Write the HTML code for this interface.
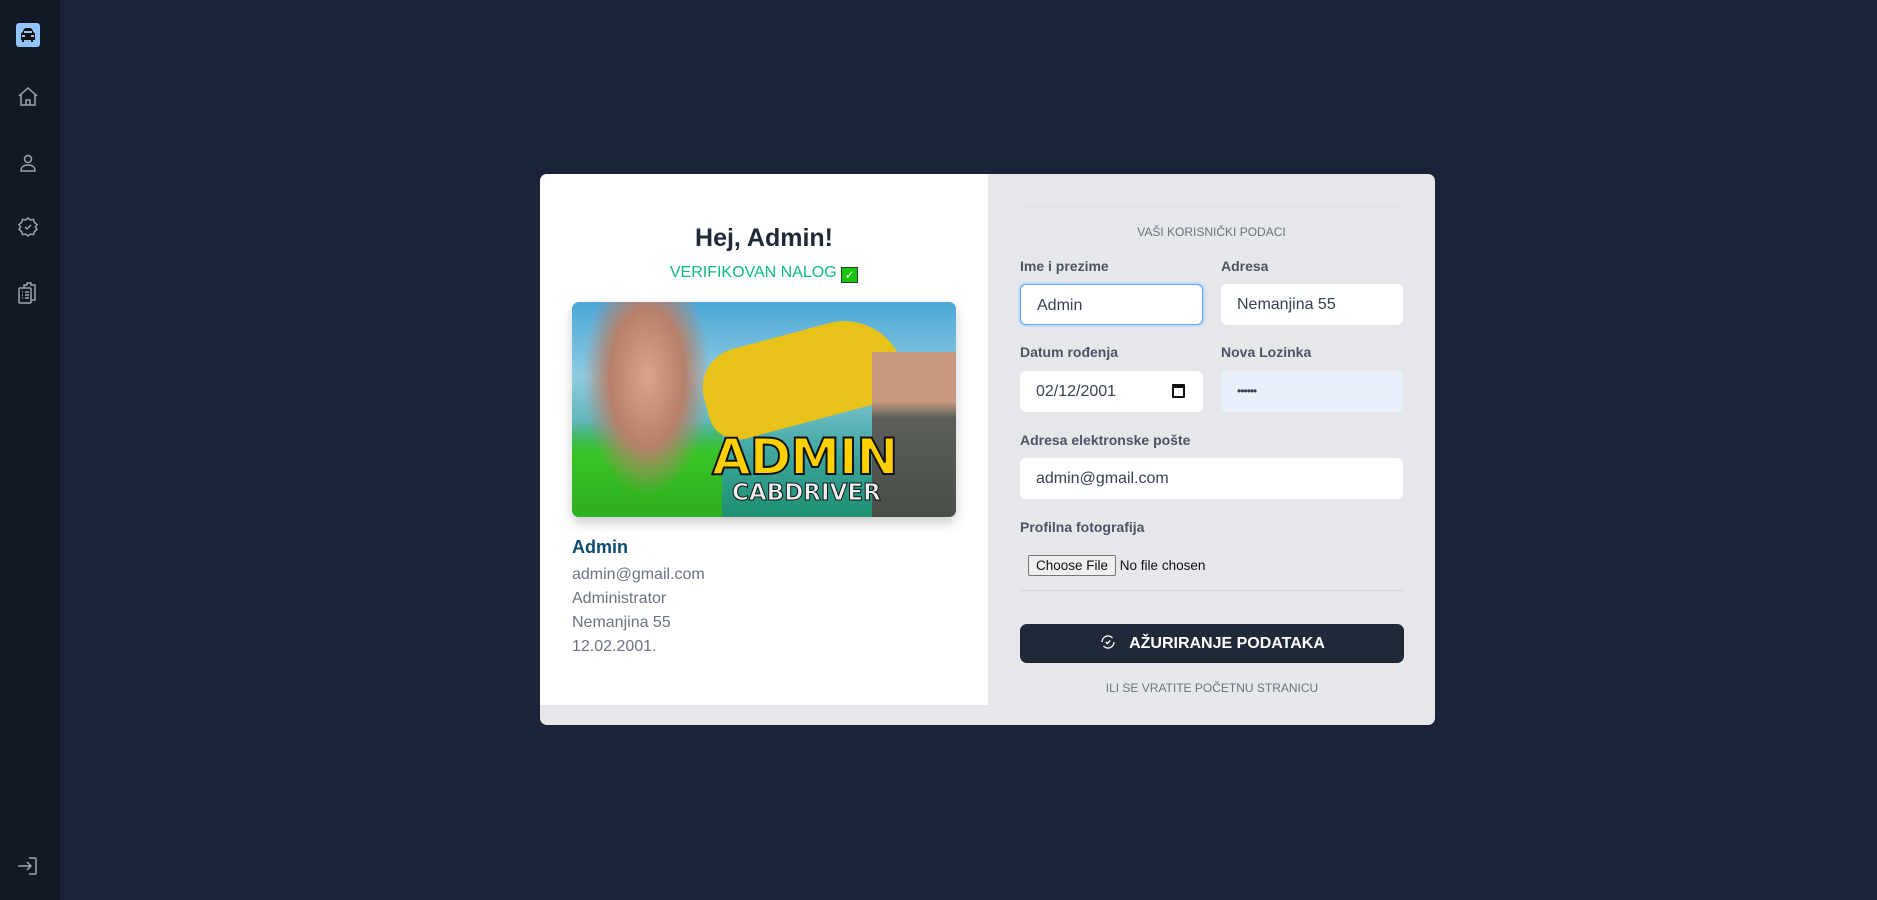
<!DOCTYPE html>
<html><head><meta charset="utf-8"><style>
*{box-sizing:border-box;margin:0;padding:0}
body{width:1877px;height:900px;background:#1b2338;font-family:"Liberation Sans",sans-serif;position:relative;overflow:hidden}
.side{position:absolute;left:0;top:0;width:60px;height:900px;background:#121826}
.ic{position:absolute;left:16px;width:24px;height:24px}
.card{position:absolute;left:540px;top:174px;width:895px;height:551px;background:#e5e7eb;border-radius:7px;overflow:hidden}
.lp{position:absolute;left:0;top:0;width:448px;height:531px;background:#fff}
.t{position:absolute;color:#6b7280}
.lbl{position:absolute;font-size:14px;font-weight:bold;color:#4b5563;line-height:16px}
.in{position:absolute;height:41px;background:#fff;border-radius:6px;font-size:16px;color:#374151;padding:0 16px;line-height:41px}
</style></head><body>
<div class="side">
<svg class="ic" style="top:23px" viewBox="0 0 24 24"><rect width="24" height="24" rx="3" fill="#93c5fd"/><path d="M9 5h6l1 2H8z" fill="#111"/><path d="M6 10l2-4h8l2 4h1v7h-2v2h-2v-2H8v2H6v-2H5v-7z" fill="#111"/><rect x="8" y="8" width="8" height="2" fill="#93c5fd"/><rect x="6" y="12" width="3" height="2" fill="#93c5fd"/><rect x="15" y="12" width="3" height="2" fill="#93c5fd"/></svg>
<svg class="ic" style="top:85px" viewBox="0 0 24 24" fill="none" stroke="#9ca3af" stroke-width="1.5"><path d="M3 11l9-8 9 8M5 9v11h14V9M10 20v-5h4v5"/></svg>
<svg class="ic" style="top:151px" viewBox="0 0 24 24" fill="none" stroke="#9ca3af" stroke-width="1.5"><circle cx="12" cy="8" r="3.5"/><path d="M5 20c0-4 3-6 7-6s7 2 7 6z"/></svg>
<svg class="ic" style="top:215px" viewBox="0 0 24 24" fill="none" stroke="#9ca3af" stroke-width="1.5"><path d="M12 3l2.5 2 3-.5 1 3 2.5 2-1.5 2.5 1.5 2.5-2.5 2-1 3-3-.5-2.5 2-2.5-2-3 .5-1-3-2.5-2 1.5-2.5L3 9.5l2.5-2 1-3 3 .5z"/><path d="M9 12l2 2 4-4"/></svg>
<svg class="ic" style="top:281px" viewBox="0 0 24 24" fill="none" stroke="#9ca3af" stroke-width="1.5"><rect x="3" y="7" width="12" height="15" rx="1"/><path d="M8 7V4h3V2h4v2h4v15h-4"/><path d="M6 11h1M9 11h4M6 14h1M9 14h4M6 17h1M9 17h4"/></svg>
<svg class="ic" style="top:854px" viewBox="0 0 24 24" fill="none" stroke="#9ca3af" stroke-width="1.5"><path d="M13 4h6a1 1 0 011 1v14a1 1 0 01-1 1h-6"/><path d="M2 12h13M11 8l4 4-4 4"/></svg>
</div>
<div class="card">
<div class="lp">
<div style="position:absolute;left:0;width:448px;top:50px;text-align:center;font-size:25px;font-weight:bold;color:#1f2937">Hej, Admin!</div>
<div style="position:absolute;left:0;width:448px;top:90px;text-align:center;font-size:16px;color:#10b981">VERIFIKOVAN NALOG <span style="display:inline-block;width:17px;height:16px;background:#16c60c;border:1px solid #333;vertical-align:-2px;color:#fff;font-size:12px;line-height:14px">✓</span></div>
<div style="position:absolute;left:32px;top:128px;width:384px;height:215px;border-radius:7px;overflow:hidden;box-shadow:0 6px 12px rgba(0,0,0,.2);background:linear-gradient(180deg,#4aa8d8 0%,#8fcbe0 35%,#3fa7a0 70%,#1d8f70 100%)">
<div style="position:absolute;left:0;top:0;width:150px;height:215px;background:radial-gradient(ellipse at 50% 35%,#d9a58a 0,#b7806a 35%,transparent 60%),linear-gradient(180deg,transparent 55%,#37c425 70%,#2fae1e 100%)"></div>
<div style="position:absolute;left:130px;top:30px;width:200px;height:90px;background:#e8c218;border-radius:40px 60px 20px 30px;transform:rotate(-15deg)"></div>
<div style="position:absolute;left:300px;top:50px;width:84px;height:165px;background:linear-gradient(#c79a80 0,#c79a80 30%,#5b5f58 40%,#4a4e48 100%)"></div>
<div style="position:absolute;left:140px;top:126px;font-size:50px;font-weight:900;color:#ffd000;-webkit-text-stroke:2px #111;font-family:'DejaVu Sans',sans-serif;letter-spacing:-1px">ADMIN</div>
<div style="position:absolute;left:160px;top:178px;font-size:23px;font-weight:900;color:#eee;-webkit-text-stroke:1px #111;font-family:'DejaVu Sans',sans-serif">CABDRIVER</div>
</div>
<div style="position:absolute;left:32px;top:363px;font-size:18px;font-weight:bold;color:#0c4a6e">Admin</div>
<div style="position:absolute;left:32px;top:389px;font-size:16px;line-height:24px;color:#6b7280">admin@gmail.com<br>Administrator<br>Nemanjina 55<br>12.02.2001.</div>
</div>
<div style="position:absolute;left:480px;top:32px;width:383px;height:1px;background:#dcdfe4"></div>
<div class="t" style="left:480px;width:383px;top:51px;text-align:center;font-size:12px">VAŠI KORISNIČKI PODACI</div>
<div class="lbl" style="left:480px;top:84px">Ime i prezime</div>
<div class="lbl" style="left:681px;top:84px">Adresa</div>
<div class="in" style="left:480px;top:110px;width:183px;border:1px solid #60a5fa;box-shadow:0 0 0 2px #bfdbfe">Admin</div>
<div class="in" style="left:681px;top:110px;width:182px">Nemanjina 55</div>
<div class="lbl" style="left:480px;top:170px">Datum rođenja</div>
<div class="lbl" style="left:681px;top:170px">Nova Lozinka</div>
<div class="in" style="left:480px;top:197px;width:183px">02/12/2001<span style="position:absolute;right:18px;top:13px;width:13px;height:14px;border:2px solid #111;border-top-width:4px;border-radius:1px"></span></div>
<div class="in" style="left:681px;top:197px;width:182px;background:#e8f0fe;font-size:12px;letter-spacing:-1px">••••••</div>
<div class="lbl" style="left:480px;top:258px">Adresa elektronske pošte</div>
<div class="in" style="left:480px;top:284px;width:383px">admin@gmail.com</div>
<div class="lbl" style="left:480px;top:345px">Profilna fotografija</div>
<div style="position:absolute;left:488px;top:381px;font-size:13.5px;color:#111"><span style="display:inline-block;border:1px solid #767676;background:#efefef;border-radius:2px;padding:2px 7px">Choose File</span> No file chosen</div>
<div style="position:absolute;left:480px;top:416px;width:384px;height:1px;background:#d1d5db"></div>
<div style="position:absolute;left:480px;top:450px;width:384px;height:39px;background:#1f2937;border-radius:7px;color:#fff;font-size:16px;font-weight:bold;text-align:center;line-height:39px"><svg width="18" height="18" viewBox="0 0 24 24" fill="none" stroke="#fff" stroke-width="1.8" style="vertical-align:-3px;margin-right:12px"><path d="M20 12a8 8 0 01-14 5.3M4 12a8 8 0 0114-5.3"/><path d="M9 12l2 2 4-4"/></svg>AŽURIRANJE PODATAKA</div>
<div class="t" style="left:480px;width:384px;top:507px;text-align:center;font-size:12px">ILI SE VRATITE POČETNU STRANICU</div>
</div>
</body></html>
